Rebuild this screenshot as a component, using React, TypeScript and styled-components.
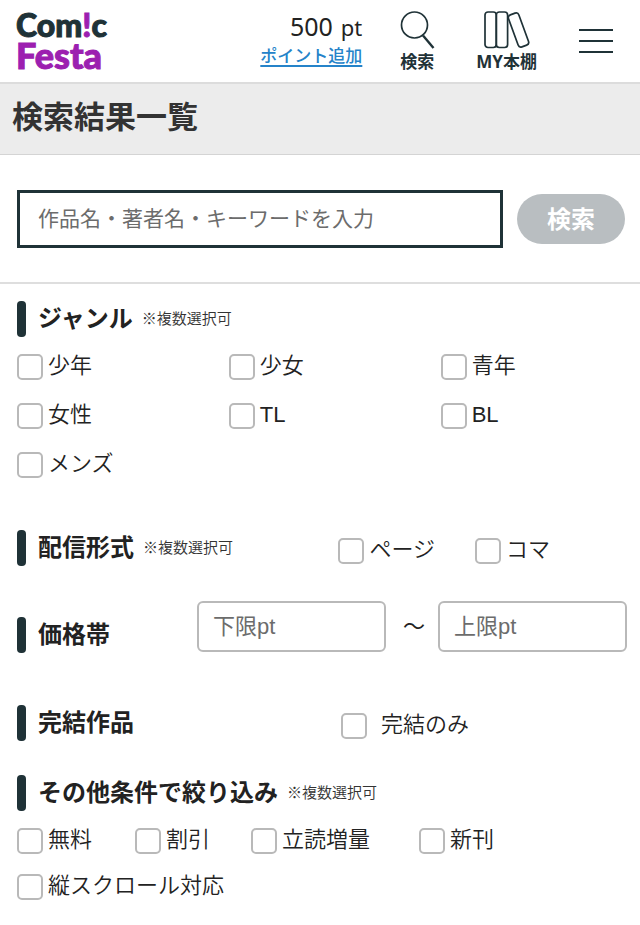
import React from "react";
import styled, { createGlobalStyle } from "styled-components";

const ink = "#1f3237";
const jp = `"Noto Sans CJK JP", sans-serif`;

const GlobalStyle = createGlobalStyle`
  * { box-sizing: border-box; }
  body {
    margin: 0;
    background: #fff;
    color: #222;
    font-family: ${jp};
  }
  h1, h2, p { margin: 0; }
  button, input { font-family: inherit; }
`;

const Header = styled.header`
  display: flex;
  align-items: flex-start;
  height: 84px;
  padding: 10px 26px 0 16px;
  border-bottom: 2px solid #dcdcdc;
`;

const Logo = styled.a`
  display: flex;
  flex-direction: column;
  gap: 2px;
  margin-right: auto;
  padding-top: 1px;
  color: ${ink};
  font-family: Lato, sans-serif;
  font-weight: 900;
  line-height: 28px;
  text-decoration: none;
  -webkit-text-stroke: 1px currentColor;
`;

const LogoTop = styled.span`
  font-size: 32px;
`;

const LogoBottom = styled.span`
  color: #9c1fb0;
  font-size: 36px;
`;

const Accent = styled.span`
  color: #9c1fb0;
`;

const Points = styled.div`
  display: flex;
  flex-direction: column;
  align-items: flex-end;
  margin-right: 37px;
`;

const Balance = styled.p`
  display: flex;
  align-items: baseline;
  gap: 8px;
  font-family: "Noto Sans", sans-serif;
  font-size: 25px;
  line-height: 32px;
`;

const Unit = styled.span`
  font-size: 22px;
`;

const PointLink = styled.a`
  color: #2583c9;
  font-size: 17px;
  font-weight: 500;
  line-height: 24px;
  text-decoration-thickness: 2px;
  text-underline-offset: 3px;
`;

const NavButton = styled.button`
  display: flex;
  flex-direction: column;
  align-items: center;
  gap: 1px;
  padding: 0;
  margin-right: 41px;
  border: 0;
  background: none;
  color: ${ink};
  font-family: "Noto Sans", ${jp};
  font-size: 17px;
  font-weight: 700;
  line-height: 22px;
`;

const MenuButton = styled.button`
  padding: 18px 0 0;
  border: 0;
  background: none;
  line-height: 0;
`;

const TitleBar = styled.div`
  height: 71px;
  padding: 8px 12px;
  border-bottom: 1px solid #d4d4d4;
  background: #ececec;
`;

const Title = styled.h1`
  color: #333;
  font-size: 31px;
  font-weight: 700;
  line-height: 46px;
`;

const SearchForm = styled.form`
  display: flex;
  align-items: center;
  gap: 14px;
  padding: 35px 15px 34px 17px;
  border-bottom: 2px solid #dedede;
`;

const Keyword = styled.input`
  flex: 1;
  min-width: 0;
  height: 58px;
  padding: 0 18px 4px;
  border: 3px solid ${ink};
  border-radius: 0;
  color: #222;
  font-size: 21px;
  outline: none;
  &::placeholder { color: #6c6c6c; opacity: 1; }
`;

const SearchButton = styled.button`
  width: 108px;
  height: 50px;
  padding: 0 0 4px;
  border: 0;
  border-radius: 25px;
  background: #b9bec1;
  color: #fff;
  font-size: 24px;
  font-weight: 700;
`;

const Filters = styled.main`
  padding: 17px 0 24px 17px;
`;

const Section = styled.section<{ $after: number }>`
  margin-bottom: ${(p) => p.$after}px;
`;

const Row = styled(Section)`
  display: flex;
  align-items: flex-end;
`;

const Heading = styled.div`
  display: flex;
  align-items: center;
  height: 36px;
  &::before {
    content: "";
    width: 9px;
    height: 36px;
    margin-right: 12px;
    border-radius: 4px;
    background: ${ink};
  }
`;

const HeadingText = styled.h2`
  font-size: 24px;
  font-weight: 700;
  line-height: 32px;
  padding-bottom: 4px;
`;

const Note = styled.span`
  margin-left: 9px;
  padding-bottom: 2px;
  color: #333;
  font-size: 15px;
  font-weight: 350;
  line-height: 24px;
`;

const GenreGrid = styled.div`
  display: grid;
  grid-template-columns: 34% 34% 1fr;
  row-gap: 23px;
  padding-top: 17px;
`;

const ConditionGrid = styled.div`
  display: grid;
  grid-template-columns: 118px 116px 168px 1fr;
  row-gap: 20px;
  padding-top: 17px;
`;

const Options = styled.div<{ $end: number }>`
  display: flex;
  gap: 40px;
  margin-left: auto;
  padding: 0 ${(p) => p.$end}px 2px 0;
`;

const Option = styled.label<{ $gap?: number; $wide?: boolean }>`
  display: flex;
  align-items: flex-start;
  gap: ${(p) => p.$gap ?? 5}px;
  height: 26px;
  white-space: nowrap;
  grid-column: ${(p) => (p.$wide ? "1 / -1" : "auto")};
  font-family: "Liberation Sans", ${jp};
  font-size: 22px;
  font-weight: 350;
  line-height: 24px;
`;

const Box = styled.input`
  appearance: none;
  width: 26px;
  height: 26px;
  margin: 0;
  border: 2px solid #b9b9b9;
  border-radius: 5px;
  background: #fff;
  &:checked { background: ${ink}; }
`;

const PriceRange = styled.div`
  display: flex;
  align-items: center;
  width: 430px;
  margin: 0 13px 1px auto;
`;

const PriceInput = styled.input`
  flex: 1;
  min-width: 0;
  height: 51px;
  padding: 0 14px;
  border: 2px solid #b9b9b9;
  border-radius: 6px;
  color: #222;
  font-family: "Liberation Sans", ${jp};
  font-size: 22px;
  &::placeholder { color: #6c6c6c; opacity: 1; }
`;

const Tilde = styled.span`
  width: 52px;
  padding: 0 0 6px 4px;
  text-align: center;
  font-size: 22px;
  line-height: 32px;
`;

const Check = ({ label, gap, wide }: { label: string; gap?: number; wide?: boolean }) => (
  <Option $gap={gap} $wide={wide}>
    <Box type="checkbox" />
    <span>{label}</span>
  </Option>
);

const SectionTitle = ({ text, multiple }: { text: string; multiple?: boolean }) => (
  <Heading>
    <HeadingText>{text}</HeadingText>
    {multiple && <Note>※複数選択可</Note>}
  </Heading>
);

const SearchIcon = () => (
  <svg width="36" height="40" viewBox="0 0 36 40" fill="none" stroke={ink} aria-hidden="true">
    <circle cx="15.5" cy="15" r="13" strokeWidth="1.7" />
    <path d="M24 25.5 34.5 38" strokeWidth="2.4" />
  </svg>
);

const BooksIcon = () => (
  <svg width="48" height="40" viewBox="0 0 48 40" fill="none" stroke={ink} strokeWidth="1.7" aria-hidden="true">
    <rect x="2" y="2" width="11.3" height="35.5" rx="3" />
    <rect x="13.3" y="2" width="11.3" height="35.5" rx="3" />
    <rect x="30" y="3" width="11" height="34" rx="3" transform="rotate(-20 35.5 20)" />
  </svg>
);

const genres = ["少年", "少女", "青年", "女性", "TL", "BL", "メンズ"];
const conditions = ["無料", "割引", "立読増量", "新刊"];

export default function App() {
  return (
    <>
      <GlobalStyle />
      <Header>
        <Logo href="#">
          <LogoTop>Com<Accent>!</Accent>c</LogoTop>
          <LogoBottom>Festa</LogoBottom>
        </Logo>
        <Points>
          <Balance>500 <Unit>pt</Unit></Balance>
          <PointLink href="#">ポイント追加</PointLink>
        </Points>
        <NavButton type="button">
          <SearchIcon />
          検索
        </NavButton>
        <NavButton type="button">
          <BooksIcon />
          MY本棚
        </NavButton>
        <MenuButton type="button" aria-label="メニュー">
          <svg width="36" height="26" viewBox="0 0 36 26" stroke={ink} strokeWidth="2" aria-hidden="true">
            <path d="M1 2H35M1 13H35M1 24H35" />
          </svg>
        </MenuButton>
      </Header>
      <TitleBar>
        <Title>検索結果一覧</Title>
      </TitleBar>
      <SearchForm onSubmit={(e) => e.preventDefault()}>
        <Keyword type="text" aria-label="キーワード" placeholder="作品名・著者名・キーワードを入力" />
        <SearchButton type="submit">検索</SearchButton>
      </SearchForm>
      <Filters>
        <Section $after={52}>
          <SectionTitle text="ジャンル" multiple />
          <GenreGrid>
            {genres.map((g) => <Check key={g} label={g} />)}
          </GenreGrid>
        </Section>
        <Row $after={35}>
          <SectionTitle text="配信形式" multiple />
          <Options $end={90}>
            <Check label="ページ" />
            <Check label="コマ" />
          </Options>
        </Row>
        <Row $after={52}>
          <SectionTitle text="価格帯" />
          <PriceRange>
            <PriceInput type="text" aria-label="下限" placeholder="下限pt" />
            <Tilde>～</Tilde>
            <PriceInput type="text" aria-label="上限" placeholder="上限pt" />
          </PriceRange>
        </Row>
        <Row $after={34}>
          <SectionTitle text="完結作品" />
          <Options $end={171}>
            <Check label="完結のみ" gap={14} />
          </Options>
        </Row>
        <Section $after={0}>
          <SectionTitle text="その他条件で絞り込み" multiple />
          <ConditionGrid>
            {conditions.map((c) => <Check key={c} label={c} />)}
            <Check label="縦スクロール対応" wide />
          </ConditionGrid>
        </Section>
      </Filters>
    </>
  );
}
